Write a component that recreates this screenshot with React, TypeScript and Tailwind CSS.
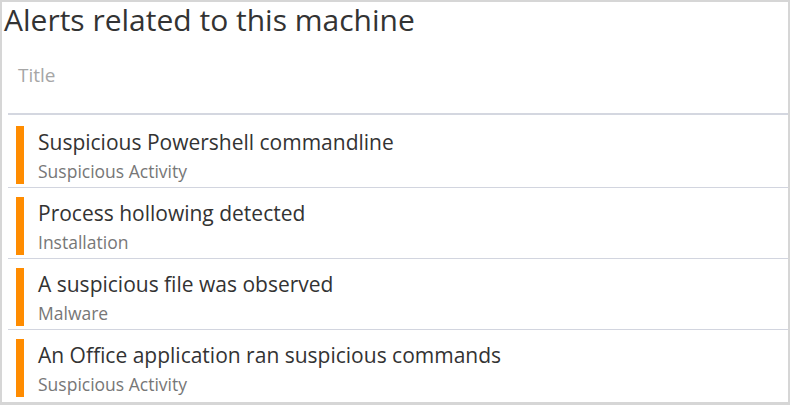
import React from "react";

const alerts = [
  { title: "Suspicious Powershell commandline", category: "Suspicious Activity" },
  { title: "Process hollowing detected", category: "Installation" },
  { title: "A suspicious file was observed", category: "Malware" },
  { title: "An Office application ran suspicious commands", category: "Suspicious Activity" },
];

export default function App() {
  return (
    <div
      className="w-[790px] h-[405px] bg-[#d6d6d6] pt-[2px] pl-[2px] pr-[2px] pb-[3px] overflow-hidden"
      style={{ fontFamily: '"Open Sans", "Noto Sans", sans-serif' }}
    >
      <div className="w-full h-full bg-white flex flex-col">
        <div className="pl-[2px] h-[41px] -mt-[3px] text-[30px] leading-[41px] text-[#333333] whitespace-nowrap">
          Alerts related to this machine
        </div>
        <div className="h-[73px] pl-[16px] pt-[24px] text-[19px] leading-[22px] text-[#a6a6a6]">
          Title
        </div>
        <div className="ml-[6px] h-[2px] bg-[#d4d7e0]" />
        <div className="flex flex-col pt-[2px] ml-[6px] overflow-hidden">
          {alerts.map((a, i) => (
            <div key={i} className="flex pt-[9px] pb-[3px] border-b border-[#d2d5df] last:border-b-0">
              <div className="ml-[8px] w-[8px] h-[58px] bg-[#ff8c00] shrink-0" />
              <div className="pl-[14px] flex flex-col">
                <div className="text-[21px] leading-[28px] pt-[2px] text-[#333333] whitespace-nowrap">{a.title}</div>
                <div className="text-[17.5px] leading-[24px] pt-[3px] text-[#777777] whitespace-nowrap">{a.category}</div>
              </div>
            </div>
          ))}
        </div>
      </div>
    </div>
  );
}
